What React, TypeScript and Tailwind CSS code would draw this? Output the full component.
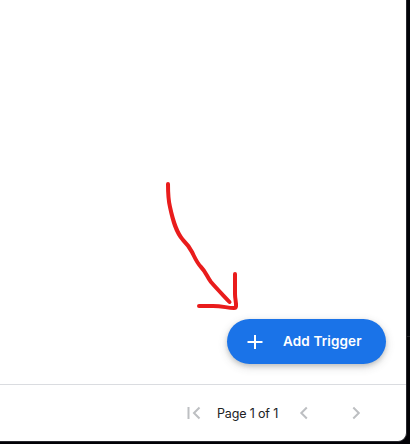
import type { ReactNode } from 'react';

function Icon({ children }: { children: ReactNode }) {
  return (
    <svg width="24" height="24" viewBox="0 0 24 24" fill="none" stroke="#bdbfc2" strokeWidth="2" className="shrink-0">
      {children}
    </svg>
  );
}

export default function App() {
  return (
    <div className="h-[444px] w-[410px] overflow-hidden bg-[linear-gradient(#020409_336px,#202126_336px,#202126_337px,#020206_337px)]">
      <div className="relative flex h-[442px] w-[407px] flex-col overflow-hidden rounded-br-[9px] border-r border-b border-[#29292e] bg-white">
        <main className="flex h-[384px] flex-col items-end justify-end pr-5 pb-5">
          <button className="flex h-[45px] w-[159px] items-center rounded-full bg-[#1a73e8] pl-4 text-white shadow-[0_2px_4px_rgba(60,64,67,0.2),0_3px_10px_rgba(60,64,67,0.2)]">
            <svg width="24" height="24" viewBox="0 0 24 24" fill="none" stroke="white" strokeWidth="2" className="mt-px shrink-0">
              <path d="M12 5v14M4.5 12h15" />
            </svg>
            <span className="ml-4 whitespace-nowrap pb-px font-['Inter',sans-serif] text-[13.5px] leading-5 font-semibold tracking-[0.13px]">
              Add Trigger
            </span>
          </button>
        </main>
        <footer className="flex h-[57px] items-center border-t border-[#dadce0] pl-[182px]">
          <Icon>
            <path d="M6.500 6v12M17.500 6.500 12 12l5.500 5.500" />
          </Icon>
          <span className="ml-[11px] w-[62px] whitespace-nowrap pt-0.5 font-['Inter',sans-serif] text-[12.5px] leading-5 tracking-[-0.15px] text-[#202124]">
            Page 1 of 1
          </span>
          <div className="ml-[13px] flex gap-7">
            <Icon>
              <path d="m14.800 6.500-5.500 5.500 5.500 5.500" />
            </Icon>
            <Icon>
              <path d="m9.300 6.500 5.500 5.500-5.500 5.500" />
            </Icon>
          </div>
        </footer>
        <svg className="pointer-events-none absolute top-0 left-0" width="406" height="384" viewBox="0 0 406 384" fill="none" stroke="#e91c1c" strokeWidth="4" strokeLinecap="round" strokeLinejoin="round">
          <path d="M168 184C168 193 168 199 170 207C173 221 176 232 183 240C187 244 190 248 192 252C195 258 197 263 201 267C206 272 207 277 211 282C217 289 224 296 229.500 302" />
          <path d="M235 274V294C235 301 238 308 234 308C227 308 223 306 213 306H199" />
        </svg>
      </div>
    </div>
  );
}
